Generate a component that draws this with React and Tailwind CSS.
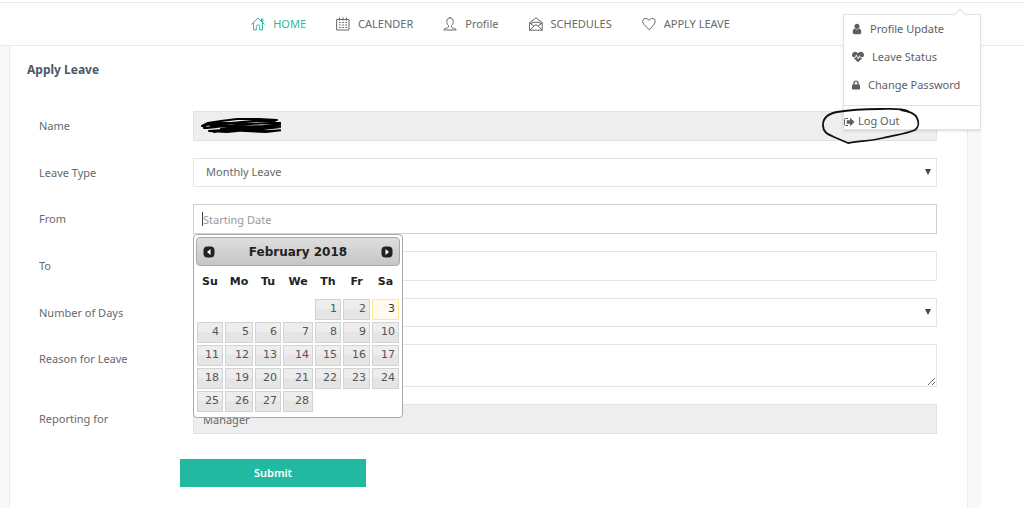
import React from "react";
import { FaHeartbeat, FaLock } from "react-icons/fa";

function LineIcon({ children }) {
  return (
    <svg viewBox="0 0 14 14" className="h-3.5 w-3.5 shrink-0" fill="none" stroke="currentColor" strokeWidth="1" strokeLinejoin="round" strokeLinecap="round" aria-hidden="true">
      {children}
    </svg>
  );
}

const HomeIcon = () => (
  <LineIcon>
    <path d="M.7 7.2 7 1l6.3 6.2M2.5 6v7h2.800V9.600a1.700 1.700 0 0 1 3.400 0V13h2.800V6M10.500 4V2h1.300v3" />
  </LineIcon>
);
const CalendarIcon = () => (
  <LineIcon>
    <path d="M1 2.500h12v10.500H1zM3.500.8v2.400M7 .8v2.400M10.500.8v2.400" />
    <path d="M3.300 5.500h1M6.500 5.500h1M9.700 5.500h1M3.300 8h1M6.500 8h1M9.700 8h1M3.300 10.500h1M6.500 10.500h1M9.700 10.500h1" />
  </LineIcon>
);
const PersonIcon = () => (
  <LineIcon>
    <path d="M7 .8C4.900 .8 3.800 2.300 3.800 4.500c0 1.700.6 3.200 1.700 4v1.300c0 .5-.4.8-1 1-1.800.5-3.300.8-3.700 2.200h12.400c-.4-1.400-1.900-1.700-3.700-2.200-.6-.2-1-.5-1-1V8.500c1.100-.8 1.700-2.300 1.700-4C10.200 2.300 9.100.8 7 .8z" />
  </LineIcon>
);
const MailIcon = () => (
  <LineIcon>
    <path d="M.8 5.500 7 .8l6.200 4.700v7.700H.8zM.8 6l3.900 3M13.200 6 9.300 9M1 13l4.200-4.200L7 7.600l1.800 1.200L13 13M2.800 7V5.300h8.400V7" />
  </LineIcon>
);
const HeartIcon = () => (
  <LineIcon>
    <path d="M7 12.600 2 7.400C.3 5.600.4 3.300 1.700 2.100 3.300.8 5.800 1.200 7 3.400 8.200 1.200 10.700.8 12.300 2.100c1.300 1.200 1.400 3.500-.3 5.300z" />
  </LineIcon>
);
const UserIcon = () => (
  <svg viewBox="0 0 1280 1792" className="h-3 w-2.5 shrink-0" fill="currentColor" aria-hidden="true">
    <path d="M1280 1399q0 109-62.5 187t-150.5 78h-854q-88 0-150.500-78t-62.500-187q0-85 8.500-160.500t31.500-152 58.500-131 94-89 134.500-34.500q131 128 313 128t313-128q76 0 134.500 34.500t94 89 58.500 131 31.500 152 8.500 160.500zm-256-887q0 159-112.500 271.500t-271.500 112.500-271.500-112.500-112.500-271.500 112.500-271.500 271.500-112.500 271.500 112.500 112.500 271.500z" />
  </svg>
);
const SignOutIcon = () => (
  <svg viewBox="0 0 12 12" className="h-3 w-3 shrink-0" aria-hidden="true">
    <path d="M4 2.500H1.500a1 1 0 0 0-1 1v5a1 1 0 0 0 1 1H4" fill="none" stroke="currentColor" />
    <path d="M6 1.800 10.500 6 6 10.200V7.800H2.800V4.200H6z" fill="currentColor" />
  </svg>
);

const navItems = [
  { label: "HOME", Icon: HomeIcon, active: true },
  { label: "CALENDER", Icon: CalendarIcon },
  { label: "Profile", Icon: PersonIcon },
  { label: "SCHEDULES", Icon: MailIcon },
  { label: "APPLY LEAVE", Icon: HeartIcon },
];

function AccountMenu() {
  return (
    <div className="absolute top-[11px] right-0 z-20 w-[138px] border border-[#dfe4ea] bg-white text-[#5c5f63] shadow-sm">
      <span className="absolute -top-[5px] right-4 h-2 w-2 rotate-45 border-t border-l border-[#dfe4ea] bg-white" />
      <ul>
        <li><a href="#profile" className="flex h-7 items-center gap-2 px-2"><UserIcon />Profile Update</a></li>
        <li><a href="#status" className="flex h-7 items-center gap-2 px-2"><FaHeartbeat className="h-3 w-3" />Leave Status</a></li>
        <li><a href="#password" className="flex h-7 items-center gap-2 px-2"><FaLock className="h-2.5 w-2" />Change Password</a></li>
      </ul>
      <a href="#logout" className="mt-1.5 flex h-6 items-center gap-0.5 border-t border-[#dfe4ea] pt-2">
        <SignOutIcon />
        Log Out
      </a>
      <svg viewBox="0 0 100 38" className="pointer-events-none absolute -bottom-4 -left-6 h-[38px] w-[100px]" fill="none" stroke="#111" strokeWidth="1.800" strokeLinecap="round" strokeLinejoin="round" aria-hidden="true">
        <path d="M88 4C81 1 70 2 60 2 44 2 29 3 17 5 7 7 3 11 3 18c0 7 4 9 11 12l14 6c10-2 23-2 35-5 12-3 23-4 32-8 4-3 4-8 2-12-2-5-9-7-16-8" />
      </svg>
    </div>
  );
}

const weeks = [
  [null, null, null, null, 1, 2, 3],
  [4, 5, 6, 7, 8, 9, 10],
  [11, 12, 13, 14, 15, 16, 17],
  [18, 19, 20, 21, 22, 23, 24],
  [25, 26, 27, 28, null, null, null],
];

function MonthButton({ label, d }) {
  return (
    <button type="button" aria-label={label} className="flex h-4 w-4 items-center justify-center">
      <svg viewBox="0 0 12 12" className="h-3 w-3" aria-hidden="true">
        <rect x=".5" y=".5" width="11" height="11" rx="4" fill="#222" />
        <path d={d} fill="#fff" />
      </svg>
    </button>
  );
}

function DatePicker() {
  return (
    <div className="absolute top-full left-0 z-10 w-[210px] rounded-[4px] border border-[#aaa] bg-white p-[2px] pb-[4px] font-['DejaVu_Sans',Verdana,sans-serif] text-[11px] text-[#222]">
      <div className="flex h-[29px] items-center justify-between rounded-[4px] border border-[#aaa] bg-linear-to-b from-[#dedede] to-[#c6c6c6] px-1 text-xs font-bold">
        <MonthButton label="Previous month" d="M7.500 3v6L4 6z" />
        <span>February 2018</span>
        <MonthButton label="Next month" d="M4.500 3v6L8 6z" />
      </div>
      <table className="w-full table-fixed border-collapse">
        <colgroup>
          <col className="w-[28px]" /><col className="w-[30px]" /><col className="w-[28px]" /><col className="w-[32px]" />
          <col className="w-[28px]" /><col className="w-[29px]" /><col className="w-[29px]" />
        </colgroup>
        <thead>
          <tr className="h-8">
            {["Su", "Mo", "Tu", "We", "Th", "Fr", "Sa"].map((d) => <th key={d} className="p-0 text-center font-bold">{d}</th>)}
          </tr>
        </thead>
        <tbody>
          {weeks.map((week, i) => (
            <tr key={i}>
              {week.map((day, j) => (
                <td key={j} className="p-px">
                  {day && (
                    <button
                      type="button"
                      className={
                        day === 3
                          ? "block h-[21px] w-full border border-[#fbe88f] bg-[#fefbee] pr-[3px] text-right text-[#363636]"
                          : "block h-[21px] w-full border border-[#d3d3d3] bg-linear-to-b from-[#ededed] from-50% to-[#e5e5e5] to-50% pr-[3px] text-right text-[#555]"
                      }
                    >
                      {day}
                    </button>
                  )}
                </td>
              ))}
            </tr>
          ))}
        </tbody>
      </table>
    </div>
  );
}

function Row({ id, label, children }) {
  return (
    <div className="grid grid-cols-[154px_1fr] items-start">
      <label htmlFor={id} className="pt-[7px] leading-4">{label}</label>
      <div className="relative flex">{children}</div>
    </div>
  );
}

function SelectBox({ id, options }) {
  return (
    <>
      <select id={id} className="h-[29px] w-full appearance-none rounded-none border border-[#e1e6eb] bg-white px-3 outline-none">
        {options.map((o) => <option key={o}>{o}</option>)}
      </select>
      <svg viewBox="0 0 6 6" className="pointer-events-none absolute top-[11px] right-1.5 h-1.5 w-1.5" aria-hidden="true">
        <path d="M0 0h6L3 6z" fill="#444" />
      </svg>
    </>
  );
}

export default function App() {
  return (
    <div className="min-h-screen bg-white pt-[2px] font-['Noto_Sans','Open_Sans',sans-serif] text-[11px] text-[#66696d]">
      <header className="border-t border-b border-[#e7e9ec]">
        <div className="relative mr-[43px] flex h-[42px] items-center justify-center">
          <nav aria-label="Main" className="flex gap-[30px]">
            {navItems.map(({ label, Icon, active }) => (
              <a key={label} href="#" className={active ? "flex items-center gap-2 text-[#2bb9a0]" : "flex items-center gap-2"}>
                <Icon />
                {label}
              </a>
            ))}
          </nav>
          <AccountMenu />
        </div>
      </header>

      <main className="mr-[43px] bg-[#f8f8f8] pr-[13px] pl-[9px]">
        <section className="min-h-[462px] border-x border-[#ebecee] bg-white pt-4 pr-[30px] pl-[29px]">
          <h1 className="-ml-3 text-xs leading-4 font-bold text-[#4b5a66]">Apply Leave</h1>
          <form className="mt-[33px] flex flex-col gap-[17px]" onSubmit={(e) => e.preventDefault()}>
            <Row id="name" label="Name">
              <input id="name" readOnly className="h-[30px] w-full border border-[#dfe3e6] bg-[#eee] px-2 outline-none" />
              <svg viewBox="0 0 80 16" className="pointer-events-none absolute top-[7px] left-2 h-4 w-20" fill="none" stroke="#000" strokeWidth="2" strokeLinecap="round" strokeLinejoin="round" aria-hidden="true">
                <path d="M1 8 7 5l13-2 16-2 22 0 18 1-22 1-20 2-18 0-6 3 20-3 22-2 22 1-24 2-20 2-18 1-9 1 20-2 22-2 24-1 19 0-26 3-24 1-18 2 18 0 24-2 26-1-26 3-20 1-20 0-14 1 18 1 20-2 22 1 15-1-18 2-20-1-18-1-14 2M2 8l4 2 10-1M4 7l12-1" />
              </svg>
            </Row>
            <Row id="type" label="Leave Type">
              <SelectBox id="type" options={["Monthly Leave"]} />
            </Row>
            <Row id="from" label="From">
              <input id="from" placeholder="Starting Date" className="h-[30px] w-full border border-[#cbd1d8] bg-white px-[9px] outline-none placeholder:text-[#999]" />
              <span className="pointer-events-none absolute top-2 left-[9px] h-3.5 w-px bg-[#444]" />
              <DatePicker />
            </Row>
            <Row id="to" label="To">
              <input id="to" className="h-[30px] w-full border border-[#e1e6eb] bg-white px-[9px] outline-none" />
            </Row>
            <Row id="days" label="Number of Days">
              <SelectBox id="days" options={[""]} />
            </Row>
            <Row id="reason" label="Reason for Leave">
              <textarea id="reason" className="block h-[43px] w-full resize-y border border-[#e1e6eb] bg-white px-[9px] outline-none" />
            </Row>
            <Row id="manager" label="Reporting for">
              <input id="manager" readOnly value="Manager" className="h-[30px] w-full border border-[#dfe3e6] bg-[#eee] px-[9px] outline-none" />
            </Row>
            <button type="submit" className="mt-2 ml-[141px] h-7 w-[186px] bg-[#23b9a1] font-semibold text-white">Submit</button>
          </form>
        </section>
      </main>
    </div>
  );
}
